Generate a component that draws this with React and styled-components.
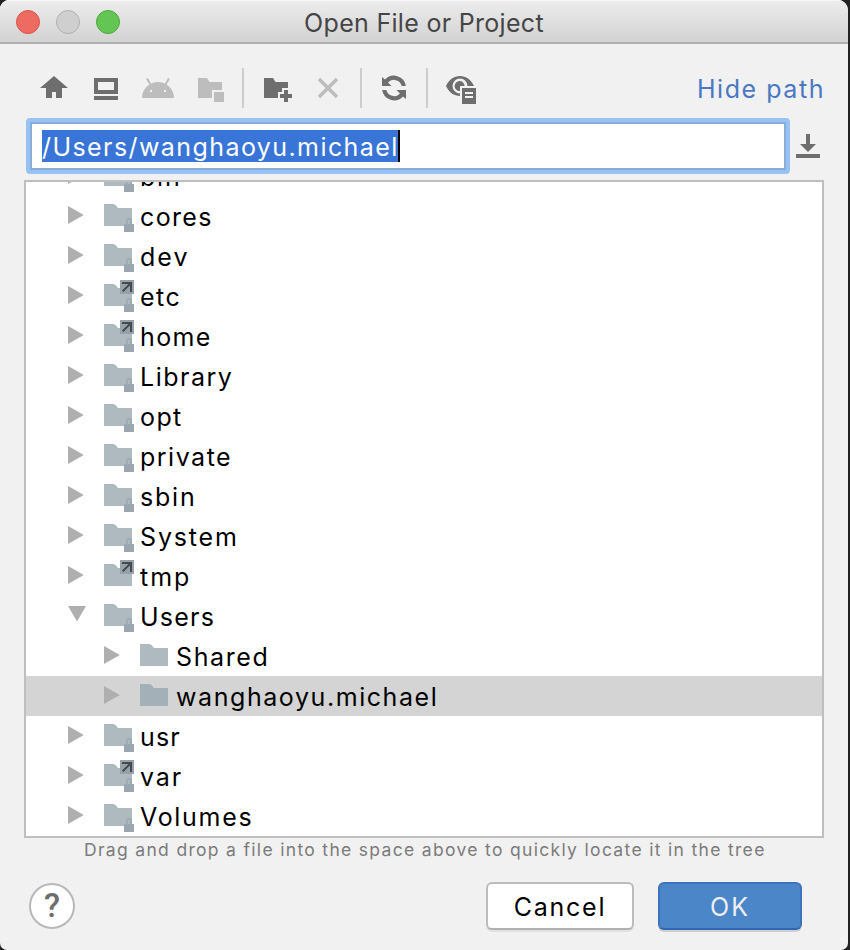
import React from "react";
import styled, { createGlobalStyle } from "styled-components";

const Global = createGlobalStyle`
  * { box-sizing: border-box; }
  body { margin: 0; background: #222; overflow: hidden; font-family: Inter, "Liberation Sans", sans-serif; }
`;

const Dialog = styled.div`
  width: 848px;
  height: 950px;
  background: #f1f1f1;
  border-radius: 9px 10px 7px 7px;
  overflow: hidden;
  display: flex;
  flex-direction: column;
`;

const TitleBar = styled.header`
  height: 44px;
  flex: none;
  display: grid;
  grid-template-columns: 1fr auto 1fr;
  align-items: center;
  padding: 0 16px;
  background: linear-gradient(#ededed, #d2d2d2);
  border-bottom: 2px solid #b0b0b0;
  box-shadow: inset 0 1px 0 #f8f8f8;
`;

const Lights = styled.div`
  display: flex;
  gap: 16px;
  padding-top: 2px;
`;

const Light = styled.span`
  width: 24px;
  height: 24px;
  border-radius: 50%;
  background: ${(p) => p.$fill};
  border: 1px solid ${(p) => p.$edge};
`;

const Title = styled.h1`
  margin: 0;
  padding-top: 4px;
  font-size: 25px;
  font-weight: 400;
  line-height: 32px;
  letter-spacing: ${(p) => p.$spacing}px;
  color: #454545;
`;

const Toolbar = styled.div`
  height: 74px;
  flex: none;
  display: flex;
  align-items: center;
  padding: 14px 23px 0 38px;
`;

const Tools = styled.div`
  display: flex;
  align-items: center;
  gap: ${(p) => p.$gap || 20}px;
`;

const Icon = styled.svg`
  display: block;
  width: 32px;
  height: 32px;
  color: ${(p) => (p.$disabled ? "#bdbdbd" : "#6e6e6e")};
`;

const Separator = styled.span`
  width: 2px;
  height: 40px;
  margin: 0 ${(p) => p.$after}px 0 16px;
  background: #cdcdcd;
`;

const PathLink = styled.a`
  margin-left: auto;
  font-size: 25px;
  line-height: 32px;
  letter-spacing: ${(p) => p.$spacing}px;
  color: #4a78c2;
  white-space: nowrap;
  padding-top: 2px;
`;

const PathRow = styled.div`
  height: 56px;
  flex: none;
  display: flex;
  align-items: center;
  padding-left: 26px;
  gap: 6px;
`;

const Field = styled.div`
  width: 764px;
  height: 56px;
  border: 4px solid #97c3f3;
  border-radius: 4px;
  background: #fff;
  box-shadow: inset 0 0 0 2px #87aedb;
  padding: 8px 12px;
`;

const Selection = styled.span`
  display: block;
  width: 358px;
  height: 32px;
  background: #3875d7;
  border-right: 2px solid #000;
  color: #fff;
  font-size: 25px;
  line-height: 34px;
  letter-spacing: ${(p) => p.$spacing}px;
  white-space: nowrap;
`;

const Tree = styled.div`
  width: 800px;
  height: 658px;
  flex: none;
  margin: 6px 0 0 24px;
  border: 2px solid #bfbfbf;
  background: #fff;
  overflow: hidden;
`;

const Rows = styled.div`
  margin-top: -26px;
`;

const Row = styled.div`
  height: 40px;
  display: flex;
  align-items: flex-start;
  padding-left: ${(p) => 42 + p.$level * 36}px;
  background: ${(p) => (p.$selected ? "#d4d4d4" : "transparent")};
`;

const Twisty = styled.svg`
  width: 36px;
  height: 40px;
  flex: none;
  color: #afafaf;
`;

const FolderSvg = styled.svg`
  width: 36px;
  height: 40px;
  flex: none;
  color: ${(p) => (p.$selected ? "#a4b0b7" : "#aeb9c0")};
`;

const Name = styled.span`
  font-size: 25px;
  line-height: 42px;
  letter-spacing: ${(p) => p.$spacing}px;
  color: #000;
  white-space: nowrap;
`;

const Hint = styled.p`
  margin: 0;
  height: 24px;
  padding-left: 84px;
  font-size: 17.5px;
  line-height: 24px;
  letter-spacing: ${(p) => p.$spacing}px;
  color: #7b7b7b;
  white-space: nowrap;
`;

const Footer = styled.footer`
  display: flex;
  align-items: center;
  padding: 20px 46px 0 29px;
`;

const Help = styled.button`
  width: 46px;
  height: 46px;
  padding: 0;
  margin-right: auto;
  border: 2px solid #b8b8b8;
  border-radius: 50%;
  background: #fff;
  display: grid;
  place-items: center;
  color: #6e6e6e;
  font: 500 33px/42px Roboto, sans-serif;
`;

const Button = styled.button`
  width: ${(p) => p.$width}px;
  height: 48px;
  margin-left: 24px;
  padding: 2px 0 0;
  border: 2px solid ${(p) => (p.$primary ? "#3d73ba" : "#bcbcbc")};
  border-bottom-color: ${(p) => (p.$primary ? "#3067b2" : "#b0b0b0")};
  border-radius: 6px;
  background: ${(p) => (p.$primary ? "#4a86c8" : "#fff")};
  box-shadow: 0 2px 0 ${(p) => (p.$primary ? "#cfcfcf" : "#e2e2e2")};
  color: ${(p) => (p.$primary ? "#efefef" : "#000")};
  font: 400 25px/40px Inter, sans-serif;
  letter-spacing: ${(p) => p.$spacing}px;
`;

function ToolIcon({ disabled, children }) {
  return (
    <Icon viewBox="0 0 32 32" $disabled={disabled} fill="currentColor">
      {children}
    </Icon>
  );
}

function FolderIcon({ locked, linked, selected }) {
  return (
    <FolderSvg viewBox="0 0 36 40" $selected={selected} fill="currentColor">
      <path d="M0 8H9Q11 8 12 9.5L14 12H28V30H0Z" />
      {linked && (
        <>
          <path d="M16 4H30V18H16Z" fill="#95a2ac" />
          <path d="M18 7H27V16M26.5 7.5L18.7 15.3" fill="none" stroke="#464a4d" strokeWidth="2" />
        </>
      )}
      {locked && (
        <>
          <path d="M22.9 28V25A2.1 2.1 0 0 1 27.1 25V28" fill="none" stroke="#9da9b2" strokeWidth="1.8" />
          <path d="M20 28H30V36H20Z" fill="#9aa7b0" />
        </>
      )}
    </FolderSvg>
  );
}

const entries = [
  { name: "bin", locked: true, spacing: 1.8 },
  { name: "cores", locked: true, spacing: 1.35 },
  { name: "dev", locked: true, spacing: 2 },
  { name: "etc", locked: true, linked: true, spacing: 1.5 },
  { name: "home", locked: true, linked: true, spacing: 1.4 },
  { name: "Library", locked: true, spacing: 1.5 },
  { name: "opt", locked: true, spacing: 1.4 },
  { name: "private", locked: true, spacing: 1.5 },
  { name: "sbin", locked: true, spacing: 1.8 },
  { name: "System", locked: true, spacing: 1.85 },
  { name: "tmp", linked: true, spacing: 2 },
  { name: "Users", locked: true, open: true, spacing: 1.25 },
  { name: "Shared", level: 1, spacing: 1.6 },
  { name: "wanghaoyu.michael", level: 1, selected: true, spacing: 1.57 },
  { name: "usr", locked: true, spacing: 1.1 },
  { name: "var", locked: true, linked: true, spacing: 1.9 },
  { name: "Volumes", locked: true, spacing: 1.7 },
];

function TreeRow({ entry }) {
  return (
    <Row $level={entry.level || 0} $selected={entry.selected}>
      <Twisty viewBox="0 0 36 40" fill="currentColor">
        <path d={entry.open ? "M0 10H18L9 25.5Z" : "M0 10L15.8 19L0 28Z"} />
      </Twisty>
      <FolderIcon locked={entry.locked} linked={entry.linked} selected={entry.selected} />
      <Name $spacing={entry.spacing}>{entry.name}</Name>
    </Row>
  );
}

export default function App() {
  return (
    <>
      <Global />
      <Dialog>
        <TitleBar>
          <Lights>
            <Light $fill="#ed6b60" $edge="#d9534a" />
            <Light $fill="#cfcfcf" $edge="#b0b0b0" />
            <Light $fill="#62c554" $edge="#4fa73c" />
          </Lights>
          <Title $spacing={0.3}>Open File or Project</Title>
        </TitleBar>
        <Toolbar>
          <Tools>
            <ToolIcon>
              <path d="M16 4L30 16H24V26H18V20H14V26H8V16H2Z" />
            </ToolIcon>
            <ToolIcon>
              <path fillRule="evenodd" d="M4 6H28V22H4ZM8 10V18H24V10ZM4 24H28V28H4Z" />
            </ToolIcon>
            <ToolIcon disabled>
              <path fillRule="evenodd" d="M0 26A16 16 0 0 1 32 26ZM8 18V20H10V18ZM22 18V20H24V18Z" />
              <path d="M5 6.5L8.5 12.5M27 6.5L23.5 12.5" stroke="currentColor" strokeWidth="2" />
            </ToolIcon>
            <ToolIcon disabled>
              <path d="M4 6H13L15.5 10H28V18H18V26H4ZM20 20H30V30H20Z" />
            </ToolIcon>
          </Tools>
          <Separator $after={18} />
          <Tools $gap={18}>
            <ToolIcon>
              <path d="M2 6H11L13.5 10H26V16H20V20H16V26H2ZM22 18H26V22H30V26H26V30H22V26H18V22H22Z" />
            </ToolIcon>
            <ToolIcon disabled>
              <path d="M7 7L25 25M25 7L7 25" stroke="currentColor" strokeWidth="3.6" />
            </ToolIcon>
          </Tools>
          <Separator $after={16} />
          <ToolIcon>
            <path d="M4 5L7 7.6A12 12 0 0 1 27.8 14H23.7A8 8 0 0 0 10 10.5L13.5 14H4Z" />
            <path d="M28 27L25 24.4A12 12 0 0 1 4.2 18H8.3A8 8 0 0 0 22 21.5L18.5 18H28Z" />
          </ToolIcon>
          <Separator $after={18} />
          <ToolIcon>
            <path
              fillRule="evenodd"
              d="M0 14C3 7.5 8 4 14 4S25 7.5 28 14H21.5A7.5 7.5 0 1 0 14 21.5V24C8 24 3 20.5 0 14Z"
            />
            <path d="M14 19A5 5 0 1 1 18.6 14H14Z" />
            <path fillRule="evenodd" d="M16 16H30V32H16ZM19 20V22H27V20ZM19 24V26H27V24Z" />
          </ToolIcon>
          <PathLink $spacing={1.55}>Hide path</PathLink>
        </Toolbar>
        <PathRow>
          <Field>
            <Selection $spacing={1.42}>/Users/wanghaoyu.michael</Selection>
          </Field>
          <Icon viewBox="4 0 32 32" fill="currentColor">
            <path d="M14 4H18V14H24L16 22L8 14H14ZM4 24H28V28H4Z" />
          </Icon>
        </PathRow>
        <Tree>
          <Rows>
            {entries.map((entry) => (
              <TreeRow key={entry.name} entry={entry} />
            ))}
          </Rows>
        </Tree>
        <Hint $spacing={1.32}>Drag and drop a file into the space above to quickly locate it in the tree</Hint>
        <Footer>
          <Help>?</Help>
          <Button $width={148} $spacing={1.75}>Cancel</Button>
          <Button $width={144} $primary $spacing={2}>OK</Button>
        </Footer>
      </Dialog>
    </>
  );
}
